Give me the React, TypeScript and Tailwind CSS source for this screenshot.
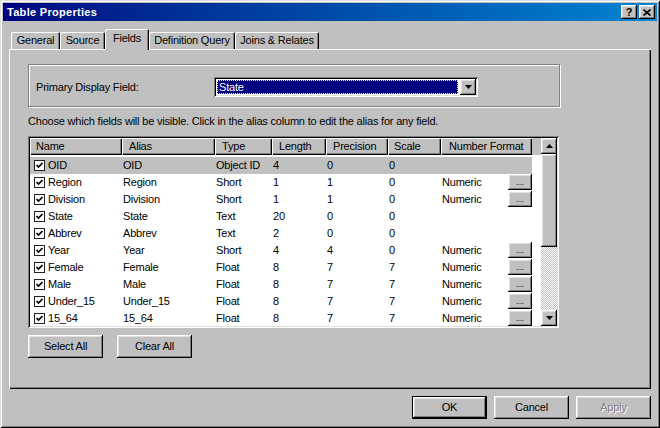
import React from 'react';

type Field = {
  name: string;
  type: string;
  len: string;
  prec: string;
  scale: string;
  fmt: string;
};

const fields: Field[] = [
  { name: 'OID', type: 'Object ID', len: '4', prec: '0', scale: '0', fmt: '' },
  { name: 'Region', type: 'Short', len: '1', prec: '1', scale: '0', fmt: 'Numeric' },
  { name: 'Division', type: 'Short', len: '1', prec: '1', scale: '0', fmt: 'Numeric' },
  { name: 'State', type: 'Text', len: '20', prec: '0', scale: '0', fmt: '' },
  { name: 'Abbrev', type: 'Text', len: '2', prec: '0', scale: '0', fmt: '' },
  { name: 'Year', type: 'Short', len: '4', prec: '4', scale: '0', fmt: 'Numeric' },
  { name: 'Female', type: 'Float', len: '8', prec: '7', scale: '7', fmt: 'Numeric' },
  { name: 'Male', type: 'Float', len: '8', prec: '7', scale: '7', fmt: 'Numeric' },
  { name: 'Under_15', type: 'Float', len: '8', prec: '7', scale: '7', fmt: 'Numeric' },
  { name: '15_64', type: 'Float', len: '8', prec: '7', scale: '7', fmt: 'Numeric' },
];

// classic win32 bevels
const raised =
  'bg-[#c0c0c0] shadow-[inset_-1px_-1px_#000,inset_1px_1px_#fff,inset_-2px_-2px_#808080,inset_2px_2px_#dfdfdf]';
const sunken =
  'shadow-[inset_1px_1px_#808080,inset_-1px_-1px_#fff,inset_2px_2px_#000,inset_-2px_-2px_#dfdfdf]';
const headerCell =
  'h-[17px] shrink-0 flex items-center bg-[#c0c0c0] shadow-[inset_1px_1px_#fff,inset_-1px_-1px_#000,inset_-2px_-2px_#808080]';

const headers = [
  { label: 'Name', w: 'w-[92px] pl-[6px]' },
  { label: 'Alias', w: 'w-[93px] pl-[7px]' },
  { label: 'Type', w: 'w-[57px] pl-[7px]' },
  { label: 'Length', w: 'w-[54px] pl-[7px]' },
  { label: 'Precision', w: 'w-[62px] pl-[7px]' },
  { label: 'Scale', w: 'w-[53px] pl-[6px]' },
  { label: 'Number Format', w: 'w-[91px] pl-[8px]' },
];

const CheckBox = () => (
  <svg width="11" height="11" viewBox="0 0 11 11" className="shrink-0">
    <rect x="0.5" y="0.5" width="10" height="10" fill="#fff" stroke="#222" />
    <path d="M2.5 5 L4.5 7 L8.5 3" fill="none" stroke="#000" strokeWidth="1.7" />
  </svg>
);

const Arrow = ({ up = false }: { up?: boolean }) => (
  <svg width="7" height="4" viewBox="0 0 7 4">
    <path d={up ? 'M0 4h7L3.5 0z' : 'M0 0h7L3.5 4z'} fill="#000" />
  </svg>
);

const Button = ({
  label,
  isDefault = false,
  disabled = false,
  className = '',
}: {
  label: string;
  isDefault?: boolean;
  disabled?: boolean;
  className?: string;
}) => (
  <div
    className={`w-[75px] h-[23px] ${isDefault ? 'border border-black' : ''} ${className}`}
  >
    <div className={`w-full h-full flex items-center justify-center ${raised}`}>
      <span
        className={
          disabled ? 'text-[#808080] [text-shadow:1px_1px_0_#fff]' : 'text-black'
        }
      >
        {label}
      </span>
    </div>
  </div>
);

const tabs = [
  { label: 'General', w: 'w-[49px]' },
  { label: 'Source', w: 'w-[45px]' },
  { label: 'Fields', w: 'w-[44px]', active: true },
  { label: 'Definition Query', w: 'w-[86px]' },
  { label: 'Joins & Relates', w: 'w-[84px]' },
];

export default function App() {
  return (
    <div className="w-[660px] h-[428px] bg-[#c0c0c0] p-[3px] flex flex-col shadow-[inset_1px_1px_#dfdfdf,inset_-1px_-1px_#000,inset_2px_2px_#fff,inset_-2px_-2px_#808080] font-['Liberation_Sans',Arial,sans-serif] text-[11px] tracking-[-0.2px] text-black select-none">
      {/* title bar */}
      <div className="h-[18px] flex items-center pl-[4px] pr-[2px] bg-linear-to-r from-[#000080] to-[#1084d0]">
        <span className="text-white font-bold text-[11px] tracking-[0.3px]">Table Properties</span>
        <div className="ml-auto flex gap-[2px]">
          <div className={`w-[16px] h-[14px] flex items-center justify-center ${raised}`}>
            <span className="font-bold text-[11px] leading-none tracking-normal">?</span>
          </div>
          <div className={`w-[16px] h-[14px] flex items-center justify-center ${raised}`}>
            <svg width="8" height="7" viewBox="0 0 8 7">
              <path d="M0.5 0.5L7.5 6.5M7.5 0.5L0.5 6.5" stroke="#000" strokeWidth="1.6" />
            </svg>
          </div>
        </div>
      </div>

      {/* tabs */}
      <div className="mt-[8px] ml-[8px] h-[20px] flex items-end">
        {tabs.map((t) => (
          <div
            key={t.label}
            className={`${t.w} flex items-center justify-center bg-[#c0c0c0] rounded-t-[2px] shadow-[inset_1px_1px_#fff,inset_-1px_0_#000,inset_-2px_0_#808080] ${
              t.active ? 'h-[21px] -mb-[1px] relative z-10 pb-[2px]' : 'h-[17px]'
            }`}
          >
            {t.label}
          </div>
        ))}
      </div>

      {/* panel */}
      <div className="mx-[6px] h-[340px] pl-[19px] pt-[15px] flex flex-col shadow-[inset_1px_1px_#fff,inset_-1px_-1px_#000,inset_-2px_-2px_#808080]">
        {/* primary display field group */}
        <div className="w-[532px] h-[43px] border border-[#808080] shadow-[inset_1px_1px_#fff,1px_1px_#fff] pt-[12px] pl-[7px] flex items-start">
          <div className="w-[178px] h-[20px] flex items-center">Primary Display Field:</div>
          <div className={`w-[264px] h-[20px] p-[2px] bg-white flex ${sunken}`}>
            <div className="flex-1 p-[1px] pr-[2px]">
              <div className="h-full bg-[#000080] outline-1 outline-dotted outline-[#ffff80] -outline-offset-1 flex items-center pl-[2px] text-white">
                State
              </div>
            </div>
            <div className={`w-[16px] h-[16px] flex items-center justify-center ${raised}`}>
              <Arrow />
            </div>
          </div>
        </div>

        <div className="mt-[7px] h-[14px] leading-[14px]">
          Choose which fields will be visible. Click in the alias column to edit the alias for any field.
        </div>

        {/* field table */}
        <div className={`mt-[8px] w-[531px] h-[192px] p-[2px] bg-white flex ${sunken}`}>
          <div className="w-[511px] h-[188px] shrink-0 overflow-hidden flex flex-col">
            <div className="flex">
              {headers.map((h) => (
                <div key={h.label} className={`${headerCell} ${h.w}`}>
                  {h.label}
                </div>
              ))}
              <div className="w-[9px] h-[17px] shrink-0 bg-[#c0c0c0]" />
            </div>
            <div className="mt-[2px] flex flex-col">
              {fields.map((f, i) => (
                <div key={f.name} className="h-[17px] flex items-start">
                  <div
                    className={`w-[502px] h-[17px] flex items-center ${
                      i === 0 ? 'bg-[#c0c0c0]' : 'bg-white'
                    }`}
                  >
                    <div className="w-[92px] pl-[4px] flex items-center gap-[3px]">
                      <CheckBox />
                      <span>{f.name}</span>
                    </div>
                    <div className="w-[93px] pl-[1px]">{f.name}</div>
                    <div className="w-[57px] pl-[1px]">{f.type}</div>
                    <div className="w-[54px] pl-[1px]">{f.len}</div>
                    <div className="w-[62px] pl-[1px]">{f.prec}</div>
                    <div className="w-[53px] pl-[1px]">{f.scale}</div>
                    <div className="w-[91px] h-[17px] pl-[1px] flex items-center justify-between">
                      <span>{f.fmt}</span>
                      {f.fmt && (
                        <div
                          className={`w-[24px] h-[16px] self-start flex items-center justify-center text-[9px] leading-none tracking-normal ${raised}`}
                        >
                          ...
                        </div>
                      )}
                    </div>
                  </div>
                </div>
              ))}
            </div>
          </div>
          {/* scrollbar */}
          <div className="w-[16px] h-[188px] shrink-0 flex flex-col">
            <div className={`h-[16px] flex items-center justify-center ${raised}`}>
              <Arrow up />
            </div>
            <div className={`h-[93px] ${raised}`} />
            <div className="flex-1 bg-[image:repeating-conic-gradient(#c0c0c0_0_25%,#ffffff_0_50%)] bg-[length:2px_2px]" />
            <div className={`h-[16px] flex items-center justify-center ${raised}`}>
              <Arrow />
            </div>
          </div>
        </div>

        <div className="mt-[7px] flex gap-[14px]">
          <Button label="Select All" />
          <Button label="Clear All" />
        </div>
      </div>

      {/* dialog buttons */}
      <div className="mt-[7px] pr-[6px] flex justify-end gap-[7px]">
        <Button label="OK" isDefault />
        <Button label="Cancel" />
        <Button label="Apply" disabled />
      </div>
    </div>
  );
}
